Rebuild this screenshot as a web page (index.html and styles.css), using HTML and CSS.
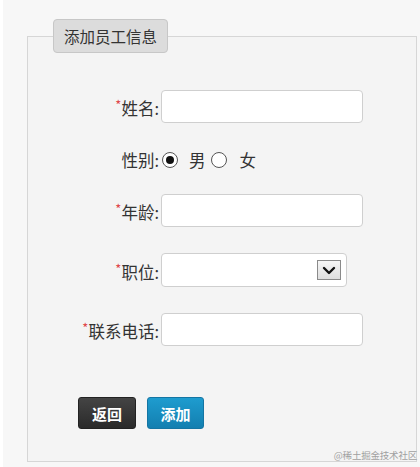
FILE: index.html
```html
<!DOCTYPE html>
<html lang="zh-CN">
<head>
<meta charset="utf-8">
<title>添加员工信息</title>
<link rel="stylesheet" href="styles.css">
</head>
<body>
<div class="page">
  <fieldset class="box">
    <legend class="box-title">添加员工信息</legend>
    <div class="form">
      <div class="row row-name">
        <label class="label"><span class="req">*</span>姓名:</label>
        <div class="input"></div>
      </div>
      <div class="row row-gender">
        <span class="label">性别:</span>
        <div class="radios">
          <span class="radio checked"></span><span class="opt opt-male">男</span>
          <span class="radio"></span><span class="opt opt-female">女</span>
        </div>
      </div>
      <div class="row row-age">
        <label class="label"><span class="req">*</span>年龄:</label>
        <div class="input"></div>
      </div>
      <div class="row row-job">
        <label class="label"><span class="req">*</span>职位:</label>
        <div class="select">
          <span class="arrow">
            <svg width="14" height="9" viewBox="0 0 14 9"><path d="M2 2 L7 7 L12 2" fill="none" stroke="#111" stroke-width="2.4" stroke-linecap="round" stroke-linejoin="round"/></svg>
          </span>
        </div>
      </div>
      <div class="row row-phone">
        <label class="label"><span class="req">*</span>联系电话:</label>
        <div class="input"></div>
      </div>
      <div class="actions">
        <button class="btn btn-back" type="button">返回</button>
        <button class="btn btn-add" type="button">添加</button>
      </div>
    </div>
  </fieldset>
  <div class="watermark">@稀土掘金技术社区</div>
</div>
</body>
</html>
```
FILE: styles.css
```css
html, body {
  margin: 0;
  padding: 0;
  background: #ffffff;
}
body {
  font-family: "Noto Sans CJK SC", "Noto Sans", "Liberation Sans", sans-serif;
  color: #333;
}
.page {
  position: relative;
  margin-left: 3px;
  height: 467px;
  background: #f7f7f7;
  padding-top: 19px;
  box-sizing: border-box;
}
.box {
  margin: 0 3px 0 24px;
  padding: 0;
  border: 1px solid #d6d6d6;
  background: #f4f4f4;
  height: 443px;
  box-sizing: border-box;
  min-width: 0;
}
.box-title {
  margin-left: 25px;
  padding: 0 10px;
  height: 34px;
  line-height: 32px;
  box-sizing: border-box;
  background: #dcdcdc;
  border: 1px solid #c7c7c7;
  border-radius: 4px;
  font-size: 15.5px;
  color: #333;
}
.form {
  display: flex;
  flex-direction: column;
}
.row {
  display: flex;
  align-items: center;
}
.label {
  width: 131px;
  flex: none;
  text-align: right;
  font-size: 16.5px;
  line-height: 20px;
  color: #333;
  margin-right: 2px;
  white-space: nowrap;
}
.req {
  color: #e0484a;
  font-size: 13px;
  vertical-align: 5px;
  margin-right: 0;
}
.input {
  width: 202px;
  height: 33px;
  box-sizing: border-box;
  background: #fff;
  border: 1px solid #cfcfcf;
  border-radius: 4px;
}
.row-name { margin-top: 37px; }
.row-gender { margin-top: 20px; height: 33px; }
.row-age { margin-top: 18px; }
.row-job { margin-top: 26px; }
.row-phone { margin-top: 26px; }
.select {
  width: 186px;
  height: 34px;
  box-sizing: border-box;
  background: #fff;
  border: 1px solid #cfcfcf;
  border-radius: 4px;
  display: flex;
  align-items: center;
  justify-content: flex-end;
  padding-right: 5px;
}
.arrow {
  width: 24px;
  height: 20px;
  box-sizing: border-box;
  border: 1px solid #8a8a8a;
  background: linear-gradient(#f6f6f6, #dedede);
  display: flex;
  align-items: center;
  justify-content: center;
}
.radios {
  display: flex;
  align-items: center;
  font-size: 16.5px;
  color: #333;
}
.radio {
  width: 16px;
  height: 16px;
  box-sizing: border-box;
  border: 1.5px solid #555;
  border-radius: 50%;
  background: #fff;
  display: flex;
  align-items: center;
  justify-content: center;
  margin-left: 1px;
}
.radio.checked::after {
  content: "";
  width: 8px;
  height: 8px;
  border-radius: 50%;
  background: #111;
}
.opt-male { margin-left: 11px; margin-right: 4px; }
.opt-female { margin-left: 13px; }
.actions {
  display: flex;
  gap: 11px;
  margin-top: 51px;
  margin-left: 50px;
}
.btn {
  height: 32px;
  padding: 0;
  border-radius: 3px;
  font-family: inherit;
  font-size: 15px;
  font-weight: bold;
  color: #fff;
  cursor: pointer;
}
.btn-back {
  width: 58px;
  background: linear-gradient(#444, #2a2a2a);
  border: 1px solid #222;
}
.btn-add {
  width: 57px;
  background: linear-gradient(#1e9ccf, #137fb0);
  border: 1px solid #1475a3;
}
.watermark {
  position: absolute;
  right: 3px;
  bottom: 5px;
  font-size: 9.5px;
  color: #a0a0a0;
  letter-spacing: -0.2px;
}
```
